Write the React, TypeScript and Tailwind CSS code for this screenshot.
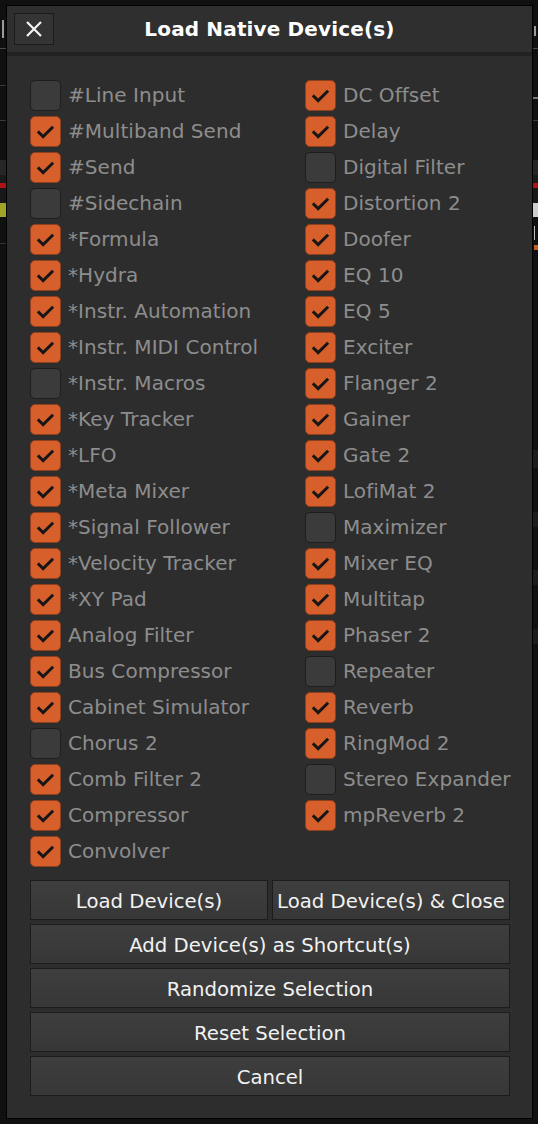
import React from "react";

const left: [string, boolean][] = [
  ["#Line Input", false],
  ["#Multiband Send", true],
  ["#Send", true],
  ["#Sidechain", false],
  ["*Formula", true],
  ["*Hydra", true],
  ["*Instr. Automation", true],
  ["*Instr. MIDI Control", true],
  ["*Instr. Macros", false],
  ["*Key Tracker", true],
  ["*LFO", true],
  ["*Meta Mixer", true],
  ["*Signal Follower", true],
  ["*Velocity Tracker", true],
  ["*XY Pad", true],
  ["Analog Filter", true],
  ["Bus Compressor", true],
  ["Cabinet Simulator", true],
  ["Chorus 2", false],
  ["Comb Filter 2", true],
  ["Compressor", true],
  ["Convolver", true],
];

const right: [string, boolean][] = [
  ["DC Offset", true],
  ["Delay", true],
  ["Digital Filter", false],
  ["Distortion 2", true],
  ["Doofer", true],
  ["EQ 10", true],
  ["EQ 5", true],
  ["Exciter", true],
  ["Flanger 2", true],
  ["Gainer", true],
  ["Gate 2", true],
  ["LofiMat 2", true],
  ["Maximizer", false],
  ["Mixer EQ", true],
  ["Multitap", true],
  ["Phaser 2", true],
  ["Repeater", false],
  ["Reverb", true],
  ["RingMod 2", true],
  ["Stereo Expander", false],
  ["mpReverb 2", true],
];

function Check({ on }: { on: boolean }) {
  return (
    <div
      className={
        on
          ? "w-[31px] h-[31px] shrink-0 rounded-[5px] border border-[#8e3f1c] bg-[#d65f2b] flex items-center justify-center"
          : "w-[31px] h-[31px] shrink-0 rounded-[5px] border border-[#1e1e1e] bg-[#3b3b3b]"
      }
    >
      {on && (
        <svg width="31" height="31" viewBox="0 0 31 31">
          <path d="M8.5 16.5 L13 21 L22.5 11.5" fill="none" stroke="#161616" strokeWidth="3.2" strokeLinecap="square" />
        </svg>
      )}
    </div>
  );
}

function Row({ label, on }: { label: string; on: boolean }) {
  return (
    <div className="h-[36px] flex items-center gap-[7px]">
      <Check on={on} />
      <span className="text-[20px] tracking-[0.05px] text-[#8d8d8d] whitespace-nowrap leading-none">{label}</span>
    </div>
  );
}

function Btn({ children, className = "" }: { children: React.ReactNode; className?: string }) {
  return (
    <div
      className={
        "h-[40px] pt-[3px] flex items-center justify-center border border-[#1c1c1c] bg-gradient-to-b from-[#3e3e3e] to-[#373737] text-[19.7px] text-[#f2f2f2] whitespace-nowrap leading-none " +
        className
      }
    >
      {children}
    </div>
  );
}

export default function App() {
  return (
    <div
      className="w-[538px] h-[1124px] bg-[#101010] flex overflow-hidden"
      style={{ fontFamily: '"DejaVu Sans", Verdana, sans-serif' }}
    >
      {/* left background strip */}
      <div className="w-[6px] shrink-0 flex flex-col">
        <div className="h-[20px]" />
        <div className="h-[18px] w-[4px] border-r-2 border-[#bdbdbd] opacity-80" />
        <div className="h-[10px]" />
        <div className="h-px bg-[#4a4a4a]" />
        <div className="h-[36px]" />
        <div className="h-px bg-[#3a3a3a]" />
        <div className="h-[34px]" />
        <div className="h-px bg-[#3a3a3a]" />
        <div className="h-[39px]" />
        <div className="h-[15px] bg-[#262626]" />
        <div className="h-[8px] bg-[#1a1a1a]" />
        <div className="h-[5px] bg-[#b01313]" />
        <div className="h-[15px] bg-[#181818]" />
        <div className="h-[14px] bg-[#a3a326]" />
        <div className="h-[26px]" />
        <div className="h-px bg-[#333]" />
      </div>

      {/* dialog */}
      <div className="mt-[5px] w-[527px] h-[1114px] shrink-0 border border-black bg-[#2d2d2d] flex flex-col">
        <div className="h-[46px] bg-[#2f2f2f] relative flex items-center justify-center">
          <div className="absolute left-[7px] top-[7px] w-[40px] h-[32px] bg-[#343434] border border-[#1b1b1b] flex items-center justify-center">
            <svg width="18" height="18" viewBox="0 0 18 18">
              <path d="M2 2 L16 16 M16 2 L2 16" stroke="#f4f4f4" strokeWidth="2.2" />
            </svg>
          </div>
          <span className="text-[20px] tracking-[0.15px] font-bold text-white leading-none">Load Native Device(s)</span>
        </div>
        <div className="h-[4px] bg-[#222222]" />
        <div className="flex-1 flex flex-col pt-[21px] pl-[23px] pr-[10px]">
          <div className="flex">
            <div className="w-[275px] shrink-0 flex flex-col">
              {left.map(([l, o]) => (
                <Row key={l} label={l} on={o} />
              ))}
            </div>
            <div className="flex flex-col">
              {right.map(([l, o]) => (
                <Row key={l} label={l} on={o} />
              ))}
            </div>
          </div>
          <div className="mt-[11px] w-[480px] flex flex-col gap-[4px]">
            <div className="flex gap-[4px]">
              <Btn className="flex-1">Load Device(s)</Btn>
              <Btn className="flex-1">Load Device(s) &amp; Close</Btn>
            </div>
            <Btn>Add Device(s) as Shortcut(s)</Btn>
            <Btn>Randomize Selection</Btn>
            <Btn>Reset Selection</Btn>
            <Btn>Cancel</Btn>
          </div>
        </div>
      </div>

      {/* right background strip */}
      <div className="w-[5px] shrink-0 flex flex-col">
        <div className="h-[26px]" />
        <div className="h-[10px] w-[2px] ml-[1px] bg-[#9a9a9a]" />
        <div className="h-[12px]" />
        <div className="h-px bg-[#4a4a4a]" />
        <div className="h-[48px]" />
        <div className="h-[2px] bg-[#777]" />
        <div className="h-[21px]" />
        <div className="h-px bg-[#3a3a3a]" />
        <div className="h-[39px]" />
        <div className="h-[15px] bg-[#262626]" />
        <div className="h-[8px] bg-[#1a1a1a]" />
        <div className="h-[5px] bg-[#b01313]" />
        <div className="h-[15px] bg-[#181818]" />
        <div className="h-[14px] bg-[#cfcfcf]" />
        <div className="h-[9px]" />
        <div className="h-[14px] w-px ml-[1px] bg-[#bbb]" />
        <div className="h-[5px]" />
        <div className="h-[5px] ml-[1px] bg-[#c45a28]" />
        <div className="h-[200px]" />
        <div className="h-[18px] bg-[#1c1c1c]" />
        <div className="h-[44px]" />
        <div className="h-[15px] bg-[#1c1c1c]" />
        <div className="h-[43px]" />
        <div className="h-[15px] bg-[#1c1c1c]" />
        <div className="h-[44px]" />
        <div className="h-[15px] bg-[#1c1c1c]" />
      </div>
    </div>
  );
}
